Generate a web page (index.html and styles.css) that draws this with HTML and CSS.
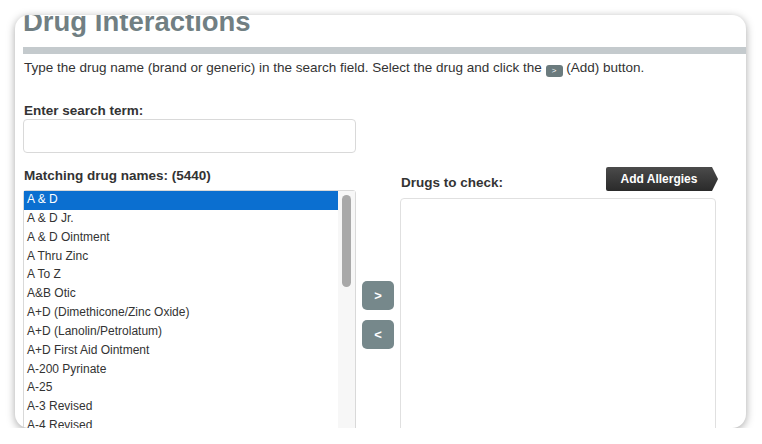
FILE: index.html
```html
<!DOCTYPE html>
<html lang="en">
<head>
    <meta charset="UTF-8">
    <title>Drug Interactions</title>
    <link rel="stylesheet" href="styles.css">
</head>
<body>
    <div class="frame">
        <div class="page">
            <h1>Drug Interactions</h1>
            <div class="rule"></div>
            <p class="intro">Type the drug name (brand or generic) in the search field. Select the drug and click the <span class="mini-btn">&gt;</span> (Add) button.</p>

            <label class="label search-label" for="term">Enter search term:</label>
            <input type="text" id="term" class="search">

            <div class="lists">
                <div class="col-left">
                    <div class="label">Matching drug names: (5440)</div>
                    <div class="listbox">
                        <div class="options" id="options"></div>
                        <div class="scrollbar"><div class="thumb"></div></div>
                    </div>
                </div>

                <div class="col-mid">
                    <button class="move">&gt;</button>
                    <button class="move">&lt;</button>
                </div>

                <div class="col-right">
                    <div class="right-head">
                        <div class="label">Drugs to check:</div>
                        <button class="allergies">Add Allergies</button>
                    </div>
                    <div class="checkbox-list"></div>
                </div>
            </div>
        </div>
    </div>

    <script>
        // seznam léků
        const drugs = ["A & D", "A & D Jr.", "A & D Ointment", "A Thru Zinc", "A To Z", "A&B Otic",
            "A+D (Dimethicone/Zinc Oxide)", "A+D (Lanolin/Petrolatum)", "A+D First Aid Ointment",
            "A-200 Pyrinate", "A-25", "A-3 Revised", "A-4 Revised"];

        let list = document.getElementById("options");
        drugs.forEach((name, index) => {
            list.innerHTML += `<div class="option${index === 0 ? " selected" : ""}">${name}</div>`;
        });
    </script>
</body>
</html>
```

FILE: styles.css
```css
body {
    margin: 0;
    background-color: #fff;
    font-family: 'Liberation Sans', Arial, sans-serif;
    color: #333;
}
.frame {
    margin: 15px 0 0 15px;
    width: 731px;
    height: 413px;
    border-radius: 14px;
    overflow: hidden;
    background-color: #fff;
    box-shadow: 0 2px 8px rgba(0, 0, 0, 0.35);
}
.page {
    padding-left: 8px;
}
h1 {
    margin: -9px 0 0 0;
    font-size: 27.5px;
    line-height: 32px;
    color: #717f83;
}
.rule {
    margin-top: 9px;
    height: 7px;
    background-color: #c4cacd;
}
.intro {
    margin: 6px 0 0 1px;
    font-size: 13.5px;
    line-height: 16px;
}
.mini-btn {
    display: inline-block;
    width: 17px;
    height: 12px;
    border-radius: 3px;
    background-color: #6b7b7e;
    color: #fff;
    font-size: 8px;
    line-height: 12px;
    text-align: center;
    vertical-align: -1px;
}
.label {
    display: block;
    font-size: 13.5px;
    line-height: 16px;
    font-weight: bold;
    padding-left: 1px;
}
.search-label {
    margin-top: 26px;
}
.search {
    display: block;
    box-sizing: border-box;
    width: 333px;
    height: 34px;
    border: 1px solid #d9d9d9;
    border-radius: 4px;
    margin: 0;
}
.lists {
    display: flex;
    align-items: flex-start;
    margin-top: 15px;
}
.col-left {
    width: 333px;
}
.listbox {
    display: flex;
    margin-top: 6px;
    box-sizing: border-box;
    height: 250px;
    border: 1px solid #d9d9d9;
    border-radius: 3px;
}
.options {
    flex: 1;
    font-size: 12px;
    overflow: hidden;
}
.option {
    height: 18.85px;
    line-height: 17px;
    padding-left: 3px;
}
.option.selected {
    background-color: #0b6fd0;
    color: #fff;
}
.scrollbar {
    width: 17px;
    background-color: #f7f7f7;
    padding: 4px 0 0 4px;
    box-sizing: border-box;
}
.thumb {
    width: 9px;
    height: 92px;
    border-radius: 5px;
    background-color: #a9a9a9;
}
.col-mid {
    display: flex;
    flex-direction: column;
    gap: 10px;
    margin: 113px 0 0 6px;
}
.move {
    width: 32px;
    height: 29px;
    border: none;
    border-radius: 5px;
    background-color: #76888b;
    color: #fff;
    font-family: 'Liberation Sans', Arial, sans-serif;
    font-size: 13px;
    font-weight: bold;
    padding: 0;
}
.col-right {
    width: 318px;
    margin: -1px 0 0 6px;
}
.right-head {
    display: flex;
    justify-content: space-between;
    align-items: flex-end;
}
.allergies {
    width: 112px;
    height: 24px;
    border: none;
    padding: 0 6px 0 0;
    background: linear-gradient(#4b4b4b, #2a2a2a);
    color: #fff;
    font-family: 'Liberation Sans', Arial, sans-serif;
    font-size: 12px;
    font-weight: bold;
    clip-path: polygon(0 0, calc(100% - 6px) 0, 100% 50%, calc(100% - 6px) 100%, 0 100%);
    border-radius: 2px 0 0 2px;
}
.checkbox-list {
    width: 316px;
    height: 240px;
    margin-top: 7px;
    box-sizing: border-box;
    border: 1px solid #e0e0e0;
    border-radius: 4px;
}
```
